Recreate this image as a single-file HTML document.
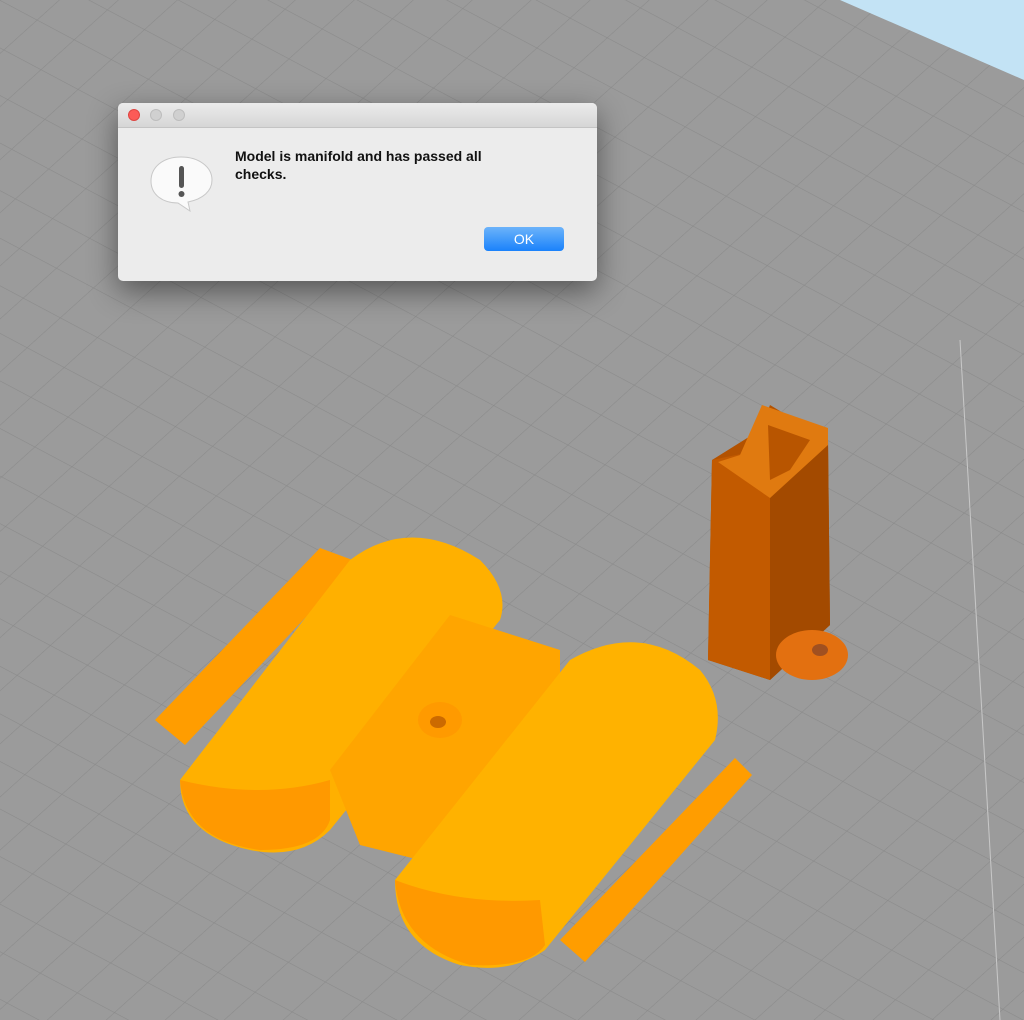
<!DOCTYPE html>
<html><head><style>
body{margin:0;width:1024px;height:1020px;overflow:hidden;background:#9b9b9b;font-family:"Liberation Sans",sans-serif;position:relative}
svg.bg{position:absolute;left:0;top:0}
.dlg{position:absolute;left:118px;top:103px;width:479px;height:178px;background:#ececec;border-radius:5px;box-shadow:0 10px 30px rgba(0,0,0,.45);overflow:hidden}
.tb{height:24px;background:linear-gradient(#ebebeb,#d6d6d6);border-bottom:1px solid #c4c4c4}
.dot{position:absolute;top:6px;width:12px;height:12px;border-radius:50%;background:#d0d0d0;border:1px solid #bdbdbd;box-sizing:border-box}
.msg{position:absolute;left:117px;top:44px;font-size:14px;font-weight:bold;color:#111;line-height:18px;width:300px}
.ok{position:absolute;left:366px;top:124px;width:80px;height:24px;border-radius:4px;background:linear-gradient(#6cb3fa,#1a82fb);color:#fff;font-size:14px;text-align:center;line-height:24px}
</style></head><body>
<svg class="bg" width="1024" height="1020">
<defs><pattern id="g" width="42" height="42" patternUnits="userSpaceOnUse" patternTransform="rotate(28) skewX(-20)">
<path d="M0 0H42M0 0V42" stroke="#8a8a8a" stroke-width="1.2" fill="none"/></pattern></defs>
<rect width="1024" height="1020" fill="url(#g)"/>
<polygon points="840,0 1024,0 1024,80" fill="#c3e3f5"/>
<line x1="960" y1="340" x2="1000" y2="1020" stroke="#c8c8c8" stroke-width="1"/>
<!-- bracket -->
<polygon points="712,460 760,430 770,405 828,440 830,625 770,680 708,660" fill="#b35200"/>
<polygon points="770,498 828,440 830,625 770,680" fill="#a34a00"/>
<polygon points="712,460 760,450 770,498 770,680 708,660" fill="#c25a00"/>
<polygon points="762,405 828,428 828,445 770,498 718,462 740,455" fill="#e07a10"/>
<polygon points="768,425 810,440 790,470 770,480" fill="#b85500"/>
<ellipse cx="812" cy="655" rx="36" ry="25" fill="#e37010"/>
<ellipse cx="820" cy="650" rx="8" ry="6" fill="#a05020"/>
<!-- main parts -->
<polygon points="155,720 320,548 358,562 185,745" fill="#ff9d00"/>
<polygon points="560,940 735,758 752,775 585,962" fill="#ff9d00"/>
<path d="M180,780 L350,560 Q410,515 480,560 Q510,590 500,620 L330,830 Q300,860 250,850 Q180,835 180,780Z" fill="#ffb000"/>
<path d="M180,780 Q185,840 260,850 Q320,850 330,820 L330,780 Q260,800 180,780Z" fill="#ff9900"/>
<polygon points="330,770 450,615 560,650 560,700 420,860 360,845" fill="#ffa500"/>
<path d="M395,880 L570,660 Q640,620 700,670 Q725,700 715,740 L545,950 Q510,975 460,965 Q395,945 395,880Z" fill="#ffb200"/>
<path d="M395,880 Q400,945 470,965 Q530,968 545,945 L540,900 Q460,905 395,880Z" fill="#ff9900"/>
<ellipse cx="440" cy="720" rx="22" ry="18" fill="#ff9a00"/>
<ellipse cx="438" cy="722" rx="8" ry="6" fill="#cc6a00"/>
</svg>
<div class="dlg">
<div class="tb"></div>
<div class="dot" style="left:10px;background:#fc5b57;border-color:#de4541"></div>
<div class="dot" style="left:32px"></div>
<div class="dot" style="left:55px"></div>
<svg style="position:absolute;left:30px;top:50px" width="66" height="62"><path d="M33 4C15 4 3 14 3 28C3 42 15 50 30 50L42 58L40 49C55 46 64 38 64 27C64 14 51 4 33 4Z" fill="#fafafa" stroke="#c8c8c8"/><rect x="31" y="13" width="5" height="22" rx="2.5" fill="#555"/><circle cx="33.5" cy="41" r="3" fill="#555"/></svg>
<div class="msg">Model is manifold and has passed all checks.</div>
<div class="ok">OK</div>
</div>
</body></html>
